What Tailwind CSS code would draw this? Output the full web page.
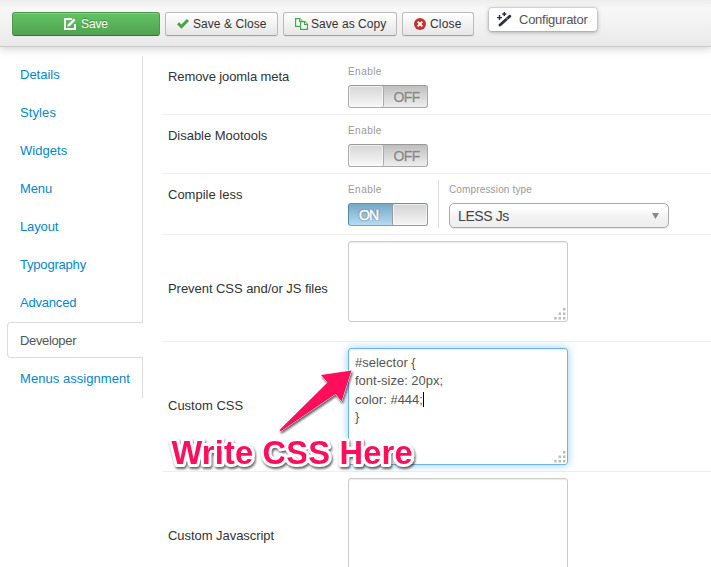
<!DOCTYPE html>
<html lang="en">
<head>
<meta charset="utf-8">
<title>Template settings</title>
<script src="https://cdn.jsdelivr.net/npm/@tailwindcss/browser@4"></script>
</head>
<body class="relative w-[711px] h-[567px] overflow-hidden bg-white font-['Liberation_Sans',Arial,sans-serif] text-[13px] leading-[18px] text-[#333]">
<svg class="hidden">
  <symbol id="grip" viewBox="0 0 12 12"><path fill="#bbb" d="M9 0h2.4v2.4H9zM4.6 4.5H7v2.4H4.6zM9 4.5h2.4v2.4H9zM.2 9h2.4v2.4H.2zM4.6 9H7v2.4H4.6zM9 9h2.4v2.4H9z"/></symbol>
</svg>
<header class="relative h-[47px] pl-3 flex items-start bg-linear-to-b from-[#ededed] via-[#f8f8f8] via-20% to-[#e9e9e9] border-b border-[#c9c9c9] shadow-[0_2px_8px_rgba(0,0,0,0.18)] text-[12px] whitespace-nowrap">
  <button class="mt-3 w-[148px] h-6 rounded-[3px] border border-[#4a9a4a] border-b-[#387038] bg-linear-to-b from-[#62c462] to-[#51a351] text-white flex items-center justify-center gap-[5px] shadow-[inset_0_1px_0_rgba(255,255,255,0.2)] [text-shadow:0_-1px_0_rgba(0,0,0,0.25)]">
    <svg class="w-3 h-3" viewBox="0 0 12 12" fill="none"><path d="M8 1H1v10h10V6" stroke="#fff" stroke-width="1.8"/><path d="M3.3 8.8 4 6.2 9.7.4l1.9 1.9-5.7 5.8z" fill="#fff"/></svg>
    <span class="tracking-[-0.15px]">Save</span>
  </button>
  <button class="ml-[5px] mt-3 w-[113px] h-6 rounded-[3px] border border-[#bbb] border-b-[#a2a2a2] bg-linear-to-b from-white to-[#e6e6e6] flex items-center pl-[11px] gap-1 shadow-[0_1px_1px_rgba(0,0,0,0.05)]">
    <svg class="w-3 h-3" viewBox="0 0 12 12"><path d="m0 6.2 2.1-2 2.3 2.2L9.8 1 12 3.1 4.5 10.7z" fill="#46a546"/></svg>
    <span class="tracking-[0.06px]">Save &amp; Close</span>
  </button>
  <button class="ml-[5px] mt-3 w-[114px] h-6 rounded-[3px] border border-[#bbb] border-b-[#a2a2a2] bg-linear-to-b from-white to-[#e6e6e6] flex items-center pl-[11px] gap-[3px] shadow-[0_1px_1px_rgba(0,0,0,0.05)]">
    <svg class="w-[13px] h-3" viewBox="0 0 13 12" fill="#fff" stroke="#46a546" stroke-width="1.2"><path d="M.6.6h4.1l2.7 2.7v5H.6z"/><path d="M4.7.6v2.7h2.7" /><path d="M5.6 3.7h4.2l2.6 2.5v5.2H5.6z"/><path d="M9.5 3.7v2.8h2.9"/></svg>
    <span class="tracking-[0.05px]">Save as Copy</span>
  </button>
  <button class="ml-[5px] mt-3 w-[72px] h-6 rounded-[3px] border border-[#bbb] border-b-[#a2a2a2] bg-linear-to-b from-white to-[#e6e6e6] flex items-center pl-[11px] gap-1 shadow-[0_1px_1px_rgba(0,0,0,0.05)]">
    <svg class="w-3 h-3" viewBox="0 0 12 12"><circle cx="6" cy="6" r="6" fill="#bd362f"/><path d="m3.7 3.7 4.6 4.6m0-4.6L3.7 8.3" stroke="#fff" stroke-width="1.9"/></svg>
    <span class="tracking-[0.2px]">Close</span>
  </button>
  <button class="ml-[15px] mt-2 w-[108px] h-[23px] rounded-[3px] bg-white flex items-center pl-2 gap-[7px] text-[#555] shadow-[0_0_1px_1px_rgba(0,0,0,0.07),0_1px_4px_rgba(0,0,0,0.35)]">
    <svg class="w-[15px] h-[15px]" viewBox="0 0 15 15" fill="none" stroke="#2b2d3b"><path d="m3 13 9.8-8.7" stroke-width="2.8" stroke-linecap="round"/><path d="m9.7 6.2 1.5 1.5" stroke="#fff" stroke-width=".8"/><path d="M0 5.6h5M2.5 3.1v5M5.3 2h4M7.3 0v4" stroke-width="1.4"/></svg>
    <span class="text-[13px] tracking-[-0.25px]">Configurator</span>
  </button>
</header>

<div class="flex">
  <nav class="w-[143px] pt-[9px] pl-[7px] shrink-0 text-[#08c] tracking-[-0.12px]">
    <ul>
      <li class="h-[38px] pl-[13px] leading-[37px] border-r border-[#ddd] tracking-normal">Details</li>
      <li class="h-[38px] pl-[13px] leading-[37px] border-r border-[#ddd] tracking-[0.1px]">Styles</li>
      <li class="h-[38px] pl-[13px] leading-[37px] border-r border-[#ddd] tracking-[0.05px]">Widgets</li>
      <li class="h-[38px] pl-[13px] leading-[37px] border-r border-[#ddd]">Menu</li>
      <li class="h-[38px] pl-[13px] leading-[37px] border-r border-[#ddd]">Layout</li>
      <li class="h-[38px] pl-[13px] leading-[37px] border-r border-[#ddd] tracking-[-0.2px]">Typography</li>
      <li class="h-[38px] pl-[13px] leading-[37px] border-r border-[#ddd] tracking-[-0.2px]">Advanced</li>
      <li class="h-9 pl-3 leading-[35px] border border-r-0 border-[#ddd] rounded-l-[4px] text-[#555] tracking-[-0.35px]">Developer</li>
      <li class="h-10 pl-[13px] pt-0.5 leading-[37px] border-r border-[#ddd] whitespace-nowrap tracking-[0.05px]">Menus assignment</li>
    </ul>
  </nav>

  <main class="ml-[19px] w-[549px] shrink-0">
    <section class="h-[68px] pt-[17px] pl-1.5 flex border-b border-[#eee]">
      <div class="w-[180px] pt-1 tracking-[-0.1px]">Remove joomla meta</div>
      <div>
        <div class="h-[21px] leading-4 text-[10px] text-[#999] tracking-[0.45px]">Enable</div>
        <div class="w-20 h-[23px] rounded-[3px] border border-[#aaa] border-t-[#999] flex overflow-hidden bg-linear-to-b from-[#bfbfbf] to-[#eee]">
          <span class="w-[35px] border-r border-[#aaa] rounded-[2px] bg-linear-to-b from-[#d6d6d6] to-[#f8f8f8] shadow-[inset_0_0_0_1px_rgba(255,255,255,0.6)]"></span>
          <span class="flex-1 text-center pl-0.5 [-webkit-text-stroke:0.4px_#888] text-[14px] tracking-[-0.6px] leading-[23px] text-[#888] [text-shadow:0_0_2px_#fff]">OFF</span>
        </div>
      </div>
    </section>
    <section class="h-[59px] pt-2 pl-1.5 flex border-b border-[#eee]">
      <div class="w-[180px] pt-1 tracking-[-0.03px]">Disable Mootools</div>
      <div>
        <div class="h-[21px] leading-4 text-[10px] text-[#999] tracking-[0.45px]">Enable</div>
        <div class="w-20 h-[23px] rounded-[3px] border border-[#aaa] border-t-[#999] flex overflow-hidden bg-linear-to-b from-[#bfbfbf] to-[#eee]">
          <span class="w-[35px] border-r border-[#aaa] rounded-[2px] bg-linear-to-b from-[#d6d6d6] to-[#f8f8f8] shadow-[inset_0_0_0_1px_rgba(255,255,255,0.6)]"></span>
          <span class="flex-1 text-center pl-0.5 [-webkit-text-stroke:0.4px_#888] text-[14px] tracking-[-0.6px] leading-[23px] text-[#888] [text-shadow:0_0_2px_#fff]">OFF</span>
        </div>
      </div>
    </section>
    <section class="h-[61px] pt-1.5 pl-1.5 flex items-start border-b border-[#eee]">
      <div class="w-[180px] pt-1.5">Compile less</div>
      <div class="w-[90px] pt-0.5">
        <div class="h-[21px] leading-4 text-[10px] text-[#999] tracking-[0.45px]">Enable</div>
        <div class="w-20 h-[23px] rounded-[3px] border border-[#999] border-l-[#5189a8] border-t-[#7290a0] flex overflow-hidden bg-linear-to-b from-[#76a7c5] to-[#b4dcf4]">
          <span class="w-[43px] pl-[10px] [-webkit-text-stroke:0.5px_#fff] text-[14px] tracking-[-0.9px] leading-[23px] text-white [text-shadow:0_0_2px_#333]">ON</span>
          <span class="flex-1 border-l border-[#999] rounded-[2px] bg-linear-to-b from-[#d3d3d3] to-[#f5f5f5] shadow-[inset_0_0_0_1px_rgba(255,255,255,0.6)]"></span>
        </div>
      </div>
      <div class="h-12 border-l border-[#ddd] pl-[10px] pt-0.5">
        <div class="h-[21px] leading-4 text-[10px] text-[#999] tracking-[0.15px]">Compression type</div>
        <div class="w-[220px] h-[25px] rounded-[5px] border border-[#aaa] bg-linear-to-b from-white from-20% via-[#f3f3f3] via-52% to-[#eee] flex items-center justify-between pl-2 pr-[9px] text-[#444] shadow-[0_1px_1px_rgba(0,0,0,0.1)]">
          <span class="text-[14px] pt-px tracking-[-0.4px]">LESS Js</span>
          <svg class="w-[7px] h-1.5" viewBox="0 0 7 6"><path d="M0 0h7L3.5 6z" fill="#888"/></svg>
        </div>
      </div>
    </section>
    <section class="h-[107px] pt-1.5 pl-1.5 flex border-b border-[#eee]">
      <div class="w-[180px] pt-[39px] tracking-[-0.05px]">Prevent CSS and/or JS files</div>
      <div class="w-[220px] h-[81px] rounded-[3px] border border-[#ccc] flex items-end justify-end p-px shadow-[inset_0_1px_1px_rgba(0,0,0,0.075)]"><svg class="w-3 h-3"><use href="#grip"/></svg></div>
    </section>
    <section class="h-[130px] pt-1.5 pl-1.5 flex border-b border-[#eee]">
      <div class="w-[180px] pt-[49px]">Custom CSS</div>
      <div class="w-[220px] h-[117px] rounded-[3px] border border-[#6fb3ec] pl-1.5 pt-[5px] pr-px pb-px flex justify-between text-[#555] shadow-[inset_0_1px_1px_rgba(0,0,0,0.075),0_0_8px_rgba(82,168,236,0.6)]">
        <div>#selector {<br>font-size: 20px;<br><span class="inline-block h-[15px] leading-[15px] align-middle border-r border-black">color: #444;</span><br>}</div>
        <svg class="w-3 h-3 self-end"><use href="#grip"/></svg>
      </div>
    </section>
    <section class="h-[120px] pt-1.5 pl-1.5 flex">
      <div class="w-[180px] pt-[49px] tracking-[-0.05px]">Custom Javascript</div>
      <div class="w-[220px] h-[117px] rounded-[3px] border border-[#ccc] shadow-[inset_0_1px_1px_rgba(0,0,0,0.075)]"></div>
    </section>
  </main>
</div>

<svg class="absolute inset-0 w-[711px] h-[567px] pointer-events-none" viewBox="0 0 711 567">
  <g class="[filter:drop-shadow(1px_2px_1px_rgba(0,0,0,0.6))]">
    <path d="M351.5 370.5 321 375l6.5 7.5-47.8 47.3q-.3 1.5 1.6 1.1L335.5 394l6 7.5z" fill="#ff0f5b" stroke="#fff" stroke-width="1" stroke-linejoin="round" paint-order="stroke"/>
    <text x="171.5" y="464" textLength="241" font-family="Liberation Sans, Arial, sans-serif" font-size="32.6" font-weight="700" fill="#ff0f5b" stroke="#fff" stroke-width="6" stroke-linejoin="round" paint-order="stroke">Write CSS Here</text>
  </g>
</svg>
</body>
</html>
